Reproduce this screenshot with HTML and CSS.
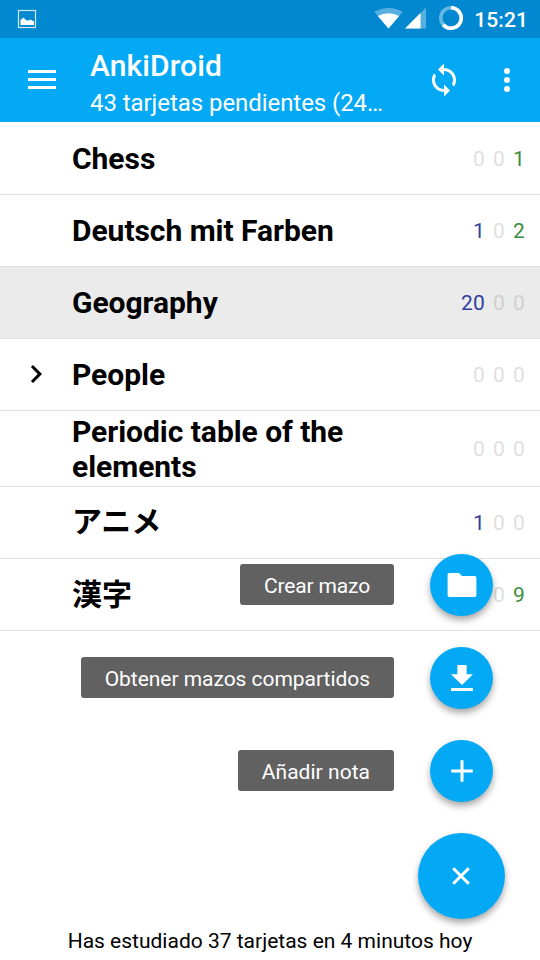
FILE: index.html
```html
<!DOCTYPE html>
<html lang="es">
<head>
<meta charset="utf-8">
<title>AnkiDroid</title>
<link rel="stylesheet" href="styles.css">
</head>
<body>
<div class="screen">
  <header class="status">
    <svg class="status-shot" width="20" height="20" viewBox="0 0 20 20"><rect x="1.500" y="1.500" width="17" height="17" fill="none" stroke="#d3e9f6" stroke-width="1.200"/><path d="M3.500 16V11l3-2.500 3 3h2l2-1 3.500 2V16z" fill="#fff"/></svg>
    <div class="status-right">
      <svg width="29" height="22" viewBox="0 0 29 22"><path d="M14.500 21.500L.3 4.800Q14.500-2.900 28.700 4.800z" fill="#fff" opacity=".34"/><path d="M14.500 21.500L3.800 9Q14.500 3.500 25.200 9z" fill="#fff"/></svg>
      <svg class="cell" width="22" height="22" viewBox="0 0 22 22"><path d="M21 .5V21.500H0z" fill="#fff" opacity=".34"/><path d="M15.500 6V21.500H0z" fill="#fff"/></svg>
      <svg class="battery" width="24" height="24" viewBox="0 0 24 24" fill="none" stroke="#fff" stroke-width="3.600"><circle cx="12" cy="12" r="10.200" opacity=".4"/><path d="M12 1.800A10.200 10.200 0 1 1 4.300 18.700"/></svg>
      <span class="clock">15:21</span>
    </div>
  </header>
  <div class="toolbar">
    <svg class="menu" width="28" height="22" viewBox="0 0 28 22" fill="#fff"><path d="M0 1.100h28v2.800H0zM0 9.100h28v2.800H0zM0 17.100h28v2.800H0z"/></svg>
    <div class="titles">
      <h1>AnkiDroid</h1>
      <p>43 tarjetas pendientes (24…</p>
    </div>
    <svg class="sync" width="36" height="36" viewBox="0 0 24 24" fill="#fff"><path d="M12 4V1L8 5l4 4V6c3.310 0 6 2.690 6 6 0 1.010-.25 1.970-.7 2.800l1.460 1.460C19.540 15.030 20 13.570 20 12c0-4.420-3.580-8-8-8zm0 14c-3.310 0-6-2.690-6-6 0-1.010.25-1.970.7-2.800L5.240 7.740C4.460 8.970 4 10.430 4 12c0 4.420 3.580 8 8 8v3l4-4-4-4v3z"/></svg>
    <svg class="more" width="36" height="36" viewBox="0 0 24 24" fill="#fff"><circle cx="12" cy="6" r="2"/><circle cx="12" cy="12" r="2"/><circle cx="12" cy="18" r="2"/></svg>
  </div>
  <main class="decks">
    <div class="deck"><div class="expander"></div><div class="name">Chess</div><div class="counts"><span>0</span><span>0</span><span class="due">1</span></div></div>
    <div class="deck"><div class="expander"></div><div class="name">Deutsch mit Farben</div><div class="counts"><span class="new">1</span><span>0</span><span class="due">2</span></div></div>
    <div class="deck selected"><div class="expander"></div><div class="name">Geography</div><div class="counts"><span class="new">20</span><span>0</span><span>0</span></div></div>
    <div class="deck"><div class="expander"><svg width="36" height="36" viewBox="0 0 24 24"><path d="M10 6L8.590 7.410 13.170 12l-4.580 4.590L10 18l6-6z"/></svg></div><div class="name">People</div><div class="counts"><span>0</span><span>0</span><span>0</span></div></div>
    <div class="deck tall"><div class="expander"></div><div class="name">Periodic table of the elements</div><div class="counts"><span>0</span><span>0</span><span>0</span></div></div>
    <div class="deck"><div class="expander"></div><div class="name kana" lang="ja">アニメ</div><div class="counts"><span class="new">1</span><span>0</span><span>0</span></div></div>
    <div class="deck"><div class="expander"></div><div class="name" lang="ja">漢字</div><div class="counts"><span>0</span><span>0</span><span class="due">9</span></div></div>
  </main>
  <footer class="summary">Has estudiado 37 tarjetas en 4 minutos hoy</footer>
  <div class="fab-menu">
    <div class="action"><span class="label narrow">Crear mazo</span><span class="fab"><svg width="36" height="36" viewBox="0 0 24 24" fill="#fff"><path d="M10 4H3.600C2.800 4 2.400 4.500 2.400 5.300v13.400c0 .8.400 1.300 1.200 1.300h16.800c.8 0 1.200-.5 1.200-1.300V7.300c0-.8-.4-1.300-1.200-1.300H12z"/></svg></span></div>
    <div class="action"><span class="label">Obtener mazos compartidos</span><span class="fab"><svg width="36" height="36" viewBox="0 0 24 24" fill="#fff"><path d="M19.300 9.500h-4.200V3.300H8.900v6.200H4.700l7.300 7.200zM4.700 18.600v2.100h14.600v-2.100z"/></svg></span></div>
    <div class="action"><span class="label wide">Añadir nota</span><span class="fab"><svg width="36" height="36" viewBox="0 0 24 24" fill="#fff"><path d="M19.200 13h-6.200v6.200h-2V13H4.800v-2H11V4.800h2V11h6.200z"/></svg></span></div>
    <span class="fab main"><svg width="36" height="36" viewBox="0 0 36 36" fill="none" stroke="#fff" stroke-width="3"><path d="M10.200 10.200l15.600 15.600M25.800 10.200L10.200 25.800"/></svg></span>
  </div>
</div>
</body>
</html>
```
FILE: styles.css
```css
* { box-sizing: border-box; }
body {
  margin: 0;
  background: #fff;
  font-family: Roboto, "Noto Sans CJK JP", sans-serif;
  color: #000;
}
svg { display: block; flex: none; }
.screen {
  position: relative;
  width: 540px;
  height: 960px;
  overflow: hidden;
  display: flex;
  flex-direction: column;
}
.status {
  height: 38px;
  flex: none;
  background: #0288d1;
  display: flex;
  justify-content: space-between;
  align-items: flex-start;
  padding: 0 12px 0 17px;
}
.status-shot { margin-top: 9px; }
.status-right { display: flex; align-items: flex-start; padding-top: 7px; }
.cell { margin-left: 2px; }
.battery { margin: -1px 11px 0 12px; }
.clock {
  color: #fff;
  font-size: 21px;
  font-weight: 500;
  line-height: 26px;
  letter-spacing: .1px;
}
.toolbar {
  height: 84px;
  flex: none;
  background: #03a9f4;
  color: #fff;
  display: flex;
  align-items: center;
  padding: 0 15px 0 28px;
}
.titles { width: 310px; margin-left: 34px; padding-top: 8px; white-space: nowrap; }
.titles h1 { margin: 0; font-size: 30px; font-weight: 500; line-height: 38px; letter-spacing: .1px; }
.titles p { margin: 0; font-size: 24px; line-height: 36px; letter-spacing: -.06px; }
.sync { margin-left: 26px; }
.more { margin-left: 27px; }
.decks { padding-top: 1px; flex: 1; }
.deck {
  height: 72px;
  display: flex;
  align-items: center;
  border-bottom: 1px solid #e0e0e0;
  padding-right: 15px;
}
.deck.tall { height: 76px; }
.deck.selected { background: #ebebeb; }
.expander { width: 72px; padding: 0 0 2px 18px; flex: none; }
.name {
  flex: 1;
  font-size: 30px;
  font-weight: 700;
  line-height: 35px;
  letter-spacing: -.04px;
  padding-right: 60px;
}
.kana { padding-bottom: 2px; }
.counts { display: flex; gap: 8px; font-size: 21px; line-height: 26px; color: #e0e0e0; letter-spacing: .2px; }
.selected .counts { color: #d0d0d0; }
.counts .new { color: #303f9f; }
.counts .due { color: #388e3c; }
.summary {
  height: 39px;
  text-align: center;
  font-size: 21px;
  line-height: 41px;
}
.fab-menu {
  position: absolute;
  right: 35px;
  top: 554px;
  display: flex;
  flex-direction: column;
  align-items: flex-end;
  gap: 31px;
}
.action { display: flex; align-items: center; gap: 36px; padding-right: 12px; }
.label {
  height: 41px;
  margin-bottom: 1px;
  padding: 3px 24px 0;
  border-radius: 3px;
  background: #616161;
  color: #fff;
  font-size: 21px;
  line-height: 38px;
  letter-spacing: -.04px;
}
.label.narrow { letter-spacing: -.15px; }
.label.wide { letter-spacing: .03px; }
.fab {
  width: 63px;
  height: 62px;
  border-radius: 50%;
  background: #03a9f4;
  box-shadow: 0 4px 7px rgba(0, 0, 0, .35);
  display: flex;
  align-items: center;
  justify-content: center;
}
.fab.main { width: 87px; height: 86px; padding-right: 1px; }
```
